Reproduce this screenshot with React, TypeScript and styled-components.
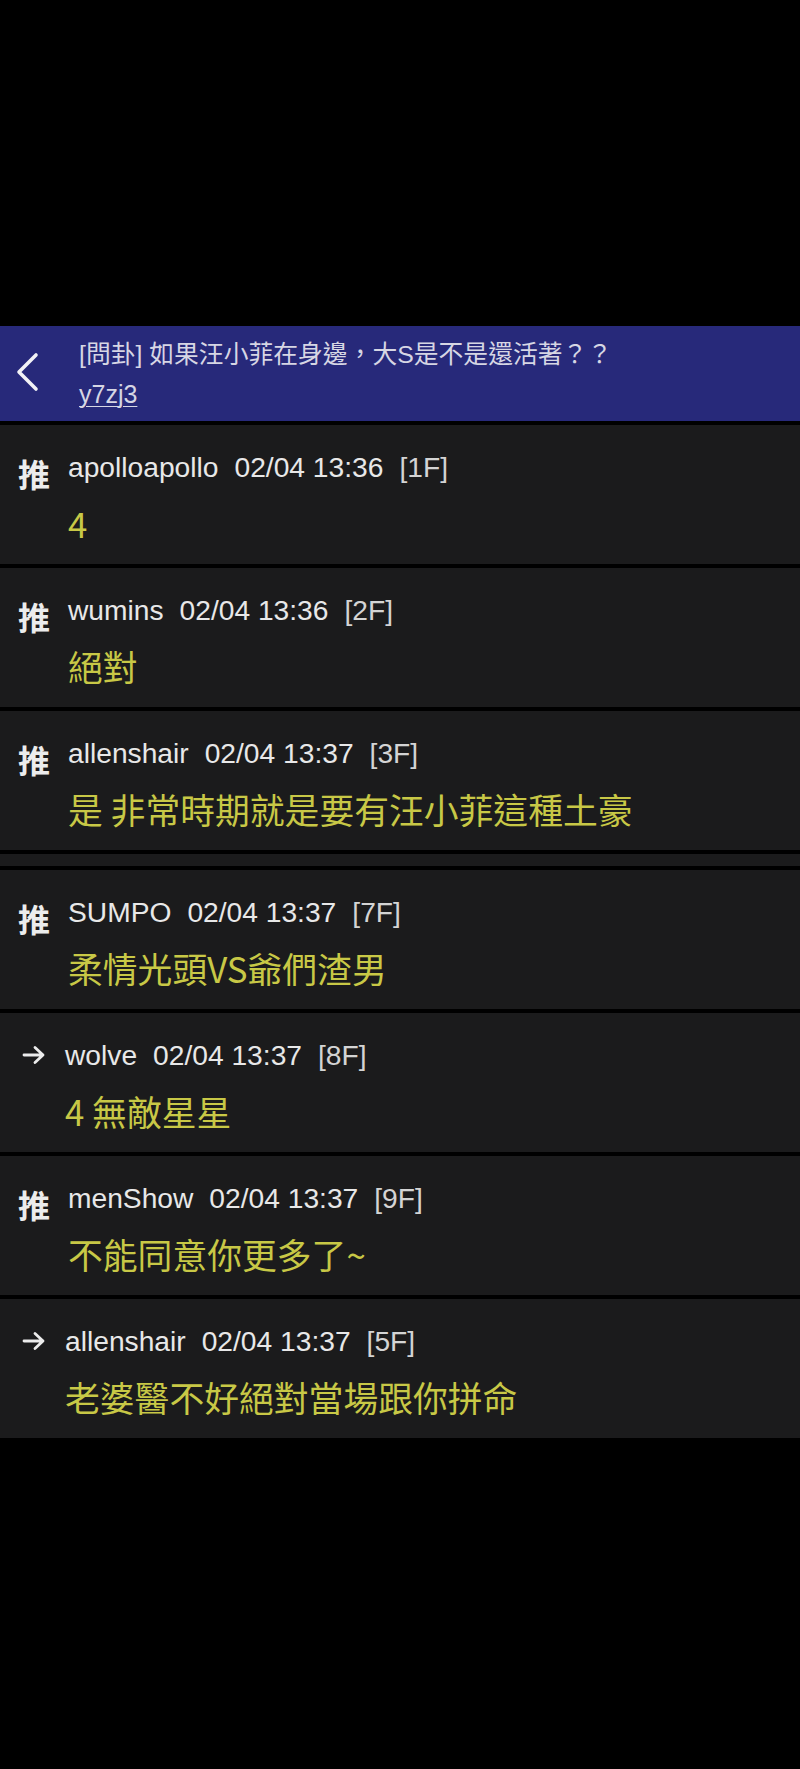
import React from "react";
import styled, { createGlobalStyle } from "styled-components";

const GlobalStyle = createGlobalStyle`
  html, body {
    margin: 0;
    padding: 0;
    background: #000;
  }
  body {
    font-family: "Liberation Sans", "Noto Sans CJK TC", sans-serif;
  }
`;

const Page = styled.div`
  width: 800px;
  min-height: 1769px;
  background: #000;
  padding-top: 326px;
  box-sizing: border-box;
  display: flex;
  flex-direction: column;
`;

const Header = styled.header`
  height: 95px;
  box-sizing: border-box;
  background: #27297a;
  display: flex;
  align-items: center;
  padding: 0 0 0 15px;
`;

const BackButton = styled.button`
  width: 24px;
  height: 40px;
  padding: 0;
  border: none;
  background: transparent;
  display: flex;
  align-items: center;
  justify-content: center;
  margin-right: 40px;
  margin-top: -3px;
`;

const HeaderText = styled.div`
  display: flex;
  flex-direction: column;
  color: #d6d6e4;
  font-family: "Liberation Sans", "Noto Sans CJK TC", sans-serif;
`;

const Title = styled.div`
  font-size: 24.8px;
  line-height: 28px;
  white-space: nowrap;
`;

const AuthorLink = styled.a`
  margin-top: 12px;
  font-size: 25px;
  line-height: 26px;
  color: #d6d6e4;
  text-decoration: underline;
  text-underline-offset: 3px;
  text-decoration-thickness: 1px;
`;

const List = styled.div`
  display: flex;
  flex-direction: column;
  gap: 4px;
  padding-top: 4px;
`;

const Card = styled.div<{ $arrow?: boolean }>`
  height: 139px;
  box-sizing: border-box;
  background: #1b1b1c;
  display: flex;
  align-items: flex-start;
  padding: 26px 0 0 ${(p) => (p.$arrow ? "22px" : "18px")};
`;

const Divider = styled.div`
  height: 12px;
  background: #1b1b1c;
`;

const Tag = styled.div`
  font-family: "Noto Sans CJK TC", sans-serif;
  font-weight: 700;
  font-size: 32px;
  line-height: 32px;
  color: #ececec;
  margin-top: 6px;
  margin-right: 18px;
`;

const ArrowBox = styled.div`
  width: 24px;
  height: 32px;
  display: flex;
  align-items: center;
  margin-right: 19px;
`;

const Body = styled.div`
  display: flex;
  flex-direction: column;
`;

const Meta = styled.div`
  display: flex;
  align-items: center;
  gap: 16px;
  height: 32px;
  font-family: "Liberation Sans", "Noto Sans CJK TC", sans-serif;
  font-size: 28.2px;
  color: #e6e6e6;
  white-space: nowrap;
`;

const MetaPart = styled.span<{ $dim?: boolean }>`
  color: ${(p) => (p.$dim ? "#d4d4d4" : "#e8e8e8")};
`;

const Comment = styled.div`
  margin-top: 18px;
  font-family: "Noto Sans CJK TC", sans-serif;
  font-size: 34.8px;
  line-height: 44px;
  color: #c8c846;
  white-space: nowrap;
`;

type Item = {
  kind: "push" | "arrow";
  user: string;
  time: string;
  floor: string;
  text: string;
};

const first: Item[] = [
  { kind: "push", user: "apolloapollo", time: "02/04 13:36", floor: "[1F]", text: "4" },
  { kind: "push", user: "wumins", time: "02/04 13:36", floor: "[2F]", text: "絕對" },
  { kind: "push", user: "allenshair", time: "02/04 13:37", floor: "[3F]", text: "是 非常時期就是要有汪小菲這種土豪" },
];

const second: Item[] = [
  { kind: "push", user: "SUMPO", time: "02/04 13:37", floor: "[7F]", text: "柔情光頭VS爺們渣男" },
  { kind: "arrow", user: "wolve", time: "02/04 13:37", floor: "[8F]", text: "4 無敵星星" },
  { kind: "push", user: "menShow", time: "02/04 13:37", floor: "[9F]", text: "不能同意你更多了~" },
  { kind: "arrow", user: "allenshair", time: "02/04 13:37", floor: "[5F]", text: "老婆醫不好絕對當場跟你拼命" },
];

const ArrowIcon = () => (
  <svg width="24" height="20" viewBox="0 0 24 20" fill="none">
    <path d="M2 10 H21 M13 2.5 L21 10 L13 17.5" stroke="#ececec" strokeWidth="2.8" strokeLinecap="round" strokeLinejoin="round" />
  </svg>
);

const ChevronIcon = () => (
  <svg width="24" height="40" viewBox="0 0 24 40" fill="none">
    <path d="M21 3 L4 20 L21 37" stroke="#f2f2f6" strokeWidth="3.6" strokeLinecap="round" strokeLinejoin="round" />
  </svg>
);

const Row = ({ item }: { item: Item }) => (
  <Card $arrow={item.kind === "arrow"}>
    {item.kind === "push" ? (
      <Tag>推</Tag>
    ) : (
      <ArrowBox>
        <ArrowIcon />
      </ArrowBox>
    )}
    <Body>
      <Meta>
        <MetaPart>{item.user}</MetaPart>
        <MetaPart>{item.time}</MetaPart>
        <MetaPart $dim>{item.floor}</MetaPart>
      </Meta>
      <Comment>{item.text}</Comment>
    </Body>
  </Card>
);

export default function App() {
  return (
    <>
      <GlobalStyle />
      <Page>
        <Header>
          <BackButton aria-label="back">
            <ChevronIcon />
          </BackButton>
          <HeaderText>
            <Title>[問卦] 如果汪小菲在身邊，大S是不是還活著？？</Title>
            <AuthorLink>y7zj3</AuthorLink>
          </HeaderText>
        </Header>
        <List>
          {first.map((it, i) => (
            <Row key={"a" + i} item={it} />
          ))}
          <Divider />
          {second.map((it, i) => (
            <Row key={"b" + i} item={it} />
          ))}
        </List>
      </Page>
    </>
  );
}
